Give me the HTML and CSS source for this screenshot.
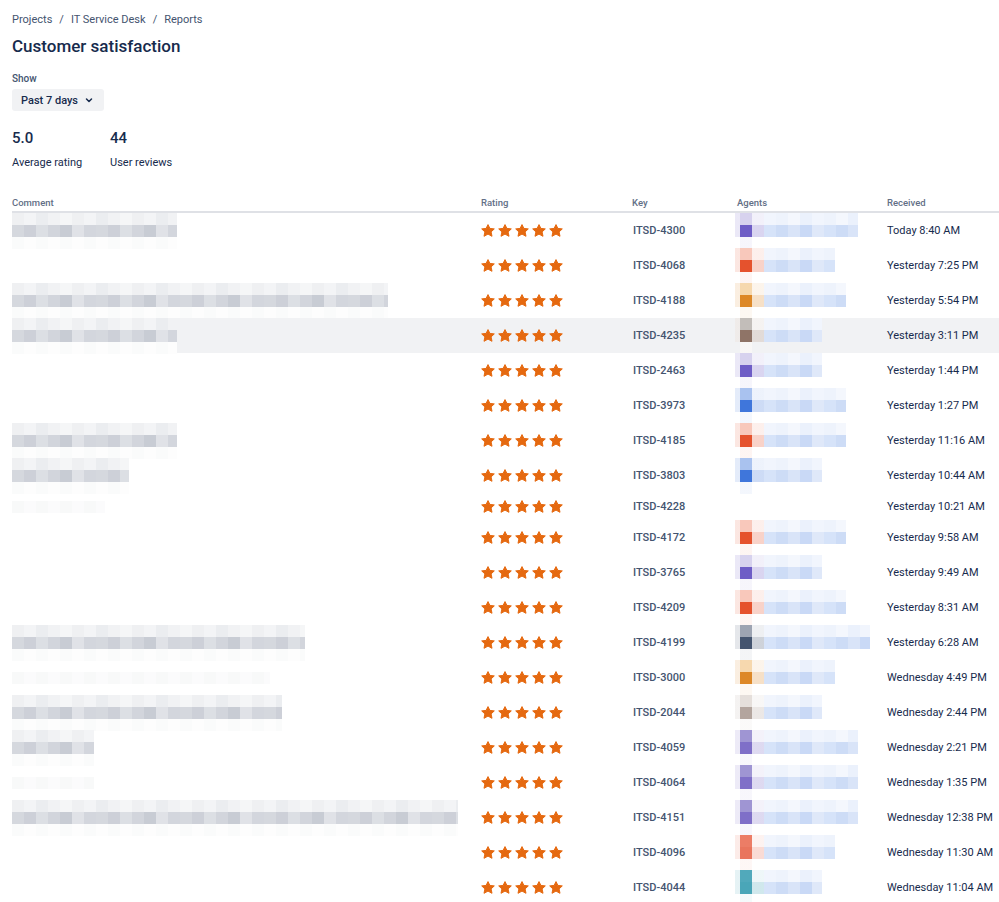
FILE: index.html
```html
<!DOCTYPE html>
<html lang="en">

<head>
  <meta charset="UTF-8">
  <meta name="viewport" content="width=device-width, initial-scale=1.0">
  <title>Customer satisfaction</title>
  <link rel="stylesheet" href="styles.css">
</head>

<body>
  <svg width="0" height="0" class="defs">
    <symbol id="star" viewBox="0 0 14 14">
      <polygon points="7,0.6 8.9,4.4 13.3,4.9 10.1,7.9 11,12.3 7,10.1 3,12.3 3.9,7.9 0.7,4.9 5.1,4.4"
        fill="currentColor" stroke="currentColor" stroke-width="1" stroke-linejoin="round" />
    </symbol>
  </svg>

  <nav class="breadcrumbs">
    <a href="#">Projects</a><span class="sep">/</span><a href="#">IT Service Desk</a><span class="sep">/</span><a href="#">Reports</a>
  </nav>
  <h1 class="page-title">Customer satisfaction</h1>

  <div class="filter">
    <label class="filter-label">Show</label>
    <button class="select">Past 7 days
      <svg width="10" height="10" viewBox="0 0 10 10"><path d="M2.5 4l2.5 2.5 2.5-2.5" fill="none" stroke="currentColor" stroke-width="1.5" stroke-linecap="round" stroke-linejoin="round"/></svg>
    </button>
  </div>

  <div class="stats">
    <div class="stat">
      <div class="stat-value">5.0</div>
      <div class="stat-label">Average rating</div>
    </div>
    <div class="stat">
      <div class="stat-value">44</div>
      <div class="stat-label">User reviews</div>
    </div>
  </div>

  <table class="reviews">
    <colgroup>
      <col class="col-comment">
      <col class="col-rating">
      <col class="col-key">
      <col class="col-agents">
      <col>
    </colgroup>
    <thead>
      <tr>
        <th>Comment</th>
        <th>Rating</th>
        <th>Key</th>
        <th>Agents</th>
        <th>Received</th>
      </tr>
    </thead>
    <tbody id="rows"></tbody>
  </table>

  <script>
    const reviews = [
      { comment: 165, key: 'ITSD-4300', agent: 'purple', name: 94, time: 'Today 8:40 AM' },
      { comment: 0, key: 'ITSD-4068', agent: 'red', name: 71, time: 'Yesterday 7:25 PM' },
      { comment: 376, key: 'ITSD-4188', agent: 'orange', name: 82, time: 'Yesterday 5:54 PM' },
      { comment: 165, key: 'ITSD-4235', agent: 'brown', name: 58, time: 'Yesterday 3:11 PM', hover: true },
      { comment: 0, key: 'ITSD-2463', agent: 'purple', name: 58, time: 'Yesterday 1:44 PM' },
      { comment: 0, key: 'ITSD-3973', agent: 'blue', name: 82, time: 'Yesterday 1:27 PM' },
      { comment: 165, key: 'ITSD-4185', agent: 'red', name: 82, time: 'Yesterday 11:16 AM' },
      { comment: 117, key: 'ITSD-3803', agent: 'blue', name: 58, time: 'Yesterday 10:44 AM' },
      { comment: 93, faint: true, key: 'ITSD-4228', agent: null, time: 'Yesterday 10:21 AM' },
      { comment: 0, key: 'ITSD-4172', agent: 'red', name: 82, time: 'Yesterday 9:58 AM' },
      { comment: 0, key: 'ITSD-3765', agent: 'purple', name: 58, time: 'Yesterday 9:49 AM' },
      { comment: 0, key: 'ITSD-4209', agent: 'red', name: 82, time: 'Yesterday 8:31 AM' },
      { comment: 293, key: 'ITSD-4199', agent: 'navy', name: 106, time: 'Yesterday 6:28 AM' },
      { comment: 258, faint: true, key: 'ITSD-3000', agent: 'orange', name: 71, time: 'Wednesday 4:49 PM' },
      { comment: 270, key: 'ITSD-2044', agent: 'taupe', name: 58, time: 'Wednesday 2:44 PM' },
      { comment: 82, key: 'ITSD-4059', agent: 'violet', name: 94, time: 'Wednesday 2:21 PM' },
      { comment: 82, faint: true, key: 'ITSD-4064', agent: 'violet', name: 94, time: 'Wednesday 1:35 PM' },
      { comment: 446, key: 'ITSD-4151', agent: 'violet', name: 94, time: 'Wednesday 12:38 PM' },
      { comment: 0, key: 'ITSD-4096', agent: 'coral', name: 71, time: 'Wednesday 11:30 AM' },
      { comment: 0, key: 'ITSD-4044', agent: 'teal', name: 58, time: 'Wednesday 11:04 AM' }
    ];

    const rows = document.getElementById('rows');
    const stars = '<svg class="star"><use href="#star"/></svg>'.repeat(5);

    reviews.forEach(review => {
      const tr = document.createElement('tr');
      if (review.hover) tr.classList.add('is-hover');

      const comment = review.comment
        ? `<div class="blur${review.faint ? ' faint' : ''}" style="width:${review.comment}px"></div>`
        : '';
      const agent = review.agent
        ? `<div class="agent av-${review.agent}"><span class="agent-av"></span><span class="agent-tint"></span><span class="agent-name" style="width:${review.name}px"></span></div>`
        : '';

      tr.innerHTML = `
        <td>${comment}</td>
        <td><div class="stars">${stars}</div></td>
        <td class="key"><a href="#">${review.key}</a></td>
        <td>${agent}</td>
        <td class="received">${review.time}</td>
      `;
      rows.appendChild(tr);
    });
  </script>
</body>

</html>
```
FILE: styles.css
```css
html {
  scrollbar-width: none;
}

::-webkit-scrollbar {
  display: none;
}

body {
  font-family: Roboto, "Liberation Sans", Arial, sans-serif;
  margin: 0;
  padding: 12px 0 0 12px;
  background-color: #fff;
  color: #172b4d;
  overflow-x: hidden;
}

.defs {
  position: absolute;
}

a {
  color: inherit;
  text-decoration: none;
}

.breadcrumbs {
  font-size: 11px;
  line-height: 15px;
  color: #44546f;
}

.breadcrumbs .sep {
  margin: 0 7px;
}

.page-title {
  margin: 7px 0 0;
  font-size: 17px;
  line-height: 24px;
  font-weight: 500;
  color: #172b4d;
}

.filter {
  margin-top: 13px;
}

.filter-label {
  display: block;
  font-size: 10px;
  line-height: 16px;
  font-weight: 500;
  color: #44546f;
}

.select {
  display: flex;
  align-items: center;
  gap: 6px;
  margin-top: 2px;
  height: 22px;
  width: 92px;
  padding: 0 0 0 9px;
  border: none;
  border-radius: 3px;
  background-color: #f1f2f4;
  color: #172b4d;
  font-family: inherit;
  font-size: 11px;
  font-weight: 500;
  cursor: pointer;
}

.stats {
  display: flex;
  margin-top: 17px;
}

.stat {
  width: 98px;
}

.stat-value {
  font-size: 15px;
  line-height: 20px;
  font-weight: 500;
}

.stat-label {
  margin-top: 7px;
  font-size: 11px;
  line-height: 16px;
}

.reviews {
  width: 100%;
  margin-top: 24px;
  table-layout: fixed;
  border-collapse: collapse;
}

.col-comment {
  width: 469px;
}

.col-rating {
  width: 151px;
}

.col-key {
  width: 105px;
}

.col-agents {
  width: 150px;
}

.reviews th {
  text-align: left;
  font-size: 9.5px;
  line-height: 16px;
  font-weight: 500;
  color: #626f86;
  padding: 0;
  border-bottom: 2px solid #dfe1e6;
}

.reviews td {
  padding: 4px 0;
  vertical-align: middle;
  font-size: 11px;
  line-height: 19px;
}

.reviews tr.is-hover td {
  background-color: #f1f2f4;
}

.blur {
  height: 36px;
  margin: -8.5px 0;
  background:
    repeating-linear-gradient(90deg, #eff0f2 0 12px, #f3f4f6 12px 24px, #ebedf0 24px 36px, #f1f2f4 36px 48px, #f5f6f7 48px 60px) top / 100% 12px no-repeat,
    repeating-linear-gradient(90deg, #d5d8de 0 12px, #cdd0d8 12px 24px, #dcdfe4 24px 36px, #d2d5dc 36px 48px, #c8ccd4 48px 60px, #e0e2e7 60px 72px, #d3d6dd 72px 84px) center / 100% 12px no-repeat,
    repeating-linear-gradient(90deg, #fafbfb 0 12px, #fdfdfd 12px 24px) bottom / 100% 12px no-repeat;
}

.blur.faint {
  background:
    repeating-linear-gradient(90deg, #f8f9f9 0 12px, #fbfbfc 12px 24px) center / 100% 12px no-repeat;
}

.stars {
  display: flex;
  gap: 3px;
  color: #e56910;
}

.star {
  width: 14px;
  height: 14px;
}

.key {
  font-size: 10px;
  font-weight: 500;
  color: #44546f;
}

.key a {
  padding-left: 1px;
}

.agent {
  display: flex;
  height: 36px;
  margin: -4.5px 0 -4.5px -2px;
}

.agent-av {
  width: 17px;
  background:
    linear-gradient(90deg, color-mix(in srgb, var(--c) 14%, white) 0 5px, transparent 5px) 0 0 / 5px 24px no-repeat,
    linear-gradient(var(--l) 0 12px, var(--c) 12px 24px, color-mix(in srgb, var(--c) 6%, white) 24px 36px) 5px 0 / 12px 36px no-repeat;
}

.agent-tint {
  width: 12px;
  background: linear-gradient(color-mix(in srgb, var(--c) 9%, white) 0 12px, color-mix(in srgb, var(--c) 26%, white) 12px 24px, transparent 24px);
}

.agent-name {
  background:
    repeating-linear-gradient(90deg, #f1f5fd 0 12px, #eef3fc 12px 24px, #f4f7fd 24px 36px, #ebf1fc 36px 48px) top / 100% 12px no-repeat,
    repeating-linear-gradient(90deg, #d6e3f9 0 12px, #cddcf6 12px 24px, #d9e4f8 24px 36px, #c9d9f6 36px 48px, #dfe8f9 48px 60px) center / 100% 12px no-repeat;
}

.av-purple { --c: #6e5dc6; --l: #d7d2ee; }
.av-red { --c: #e5522d; --l: #f8c8bb; }
.av-orange { --c: #dd8827; --l: #f6d8ae; }
.av-brown { --c: #8f7467; --l: #c2bdb9; }
.av-blue { --c: #3f76db; --l: #a9c2ef; }
.av-navy { --c: #44546f; --l: #9da4b2; }
.av-taupe { --c: #b3a59e; --l: #e5dfdb; }
.av-violet { --c: #7f6fc8; --l: #9f95d3; }
.av-coral { --c: #e9755d; --l: #ec7d66; }
.av-teal { --c: #4aa6b8; --l: #51a9bb; }

.received {
  color: #172b4d;
  white-space: nowrap;
}
```
